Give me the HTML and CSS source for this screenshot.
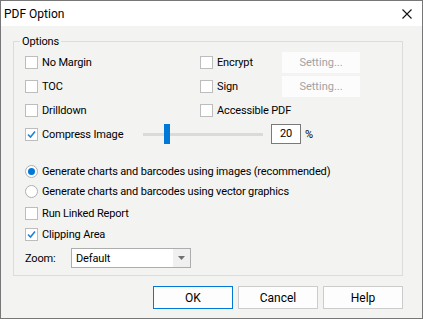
FILE: index.html
```html
<!DOCTYPE html>
<html lang="en">
<head>
    <meta charset="UTF-8">
    <meta name="viewport" content="width=device-width, initial-scale=1.0">
    <title>PDF Option</title>
    <link rel="stylesheet" href="styles.css">
</head>
<body>
    <div class="window">
        <div class="titlebar">
            <span class="title">PDF Option</span>
            <svg class="close" width="10" height="10" viewBox="0 0 10 10">
                <path d="M0.5 0.5 L9.5 9.5 M9.5 0.5 L0.5 9.5" stroke="#111" stroke-width="1.1" fill="none"/>
            </svg>
        </div>

        <fieldset class="group">
            <legend>Options</legend>
            <div class="options">
                <div class="grid">
                    <div class="row">
                        <span class="check"></span>
                        <span class="label">No Margin</span>
                    </div>
                    <div class="row">
                        <span class="check"></span>
                        <span class="label fixed">Encrypt</span>
                        <button class="setting" disabled>Setting...</button>
                    </div>
                    <div class="row">
                        <span class="check"></span>
                        <span class="label">TOC</span>
                    </div>
                    <div class="row">
                        <span class="check"></span>
                        <span class="label fixed">Sign</span>
                        <button class="setting" disabled>Setting...</button>
                    </div>
                    <div class="row">
                        <span class="check"></span>
                        <span class="label">Drilldown</span>
                    </div>
                    <div class="row">
                        <span class="check"></span>
                        <span class="label">Accessible PDF</span>
                    </div>
                </div>

                <div class="row">
                    <span class="check checked">
                        <svg width="11" height="11" viewBox="0 0 11 11"><polyline points="2,5.5 4.5,8 9,2.5" stroke="#1a84d8" stroke-width="1.6" fill="none"/></svg>
                    </span>
                    <span class="label compress">Compress Image</span>
                    <div class="slider">
                        <div class="track"></div>
                        <div class="thumb"></div>
                    </div>
                    <div class="number">20</div>
                    <span class="percent">%</span>
                </div>

                <div class="radios">
                    <div class="row short">
                        <span class="radio on"></span>
                        <span class="label">Generate charts and barcodes using images (recommended)</span>
                    </div>
                    <div class="row short">
                        <span class="radio"></span>
                        <span class="label">Generate charts and barcodes using vector graphics</span>
                    </div>
                </div>

                <div class="row short linked">
                    <span class="check"></span>
                    <span class="label">Run Linked Report</span>
                </div>
                <div class="row short clipping">
                    <span class="check checked">
                        <svg width="11" height="11" viewBox="0 0 11 11"><polyline points="2,5.5 4.5,8 9,2.5" stroke="#1a84d8" stroke-width="1.6" fill="none"/></svg>
                    </span>
                    <span class="label">Clipping Area</span>
                </div>
                <div class="row short zoom">
                    <span class="zoom-label">Zoom:</span>
                    <div class="select">
                        <span class="value">Default</span>
                        <span class="arrow">
                            <svg width="7" height="4" viewBox="0 0 7 4"><polygon points="0,0 7,0 3.5,4" fill="#707070"/></svg>
                        </span>
                    </div>
                </div>
            </div>
        </fieldset>

        <div class="actions">
            <button class="btn default">OK</button>
            <button class="btn">Cancel</button>
            <button class="btn">Help</button>
        </div>
    </div>
</body>
</html>
```
FILE: styles.css
```css
body {
    margin: 0;
    font-family: Roboto, "Liberation Sans", sans-serif;
    font-size: 11px;
    letter-spacing: -0.15px;
    color: #000;
}

.window {
    width: 423px;
    height: 319px;
    box-sizing: border-box;
    border: 1px solid #777;
    background: #f3f3f2;
}

.titlebar {
    height: 25px;
    background: #fff;
    display: flex;
    align-items: center;
    justify-content: space-between;
    padding: 0 10px 0 3px;
}

.title {
    font-size: 12px;
    letter-spacing: 0;
}

.close {
    margin-top: 1px;
}

.group {
    margin: 8px 19px 0 12px;
    padding: 0;
    border: 1px solid #dcdcdc;
    min-width: 0;
}

.group legend {
    margin-left: 6px;
    padding: 0 2px;
    line-height: 15px;
}

.options {
    padding: 1px 0 7px 11px;
}

.grid {
    display: grid;
    grid-template-columns: 175px 1fr;
}

.row {
    height: 24px;
    display: flex;
    align-items: center;
}

.row.short {
    height: 20px;
}

.check {
    width: 13px;
    height: 13px;
    box-sizing: border-box;
    border: 1px solid #bdbdbd;
    background: #fff;
    flex: none;
    display: flex;
    align-items: center;
    justify-content: center;
}

.label {
    margin-left: 4px;
    white-space: nowrap;
}

.label.fixed {
    width: 65px;
}

.setting {
    width: 78px;
    height: 21px;
    border: none;
    background: #fcfcfc;
    color: #a2a2a2;
    font: inherit;
    padding: 0;
}

.label.compress {
    width: 101px;
}

.slider {
    width: 120px;
    height: 20px;
    position: relative;
    display: flex;
    align-items: center;
}

.track {
    width: 100%;
    height: 3px;
    background: #dadada;
}

.thumb {
    position: absolute;
    left: 21px;
    top: 0;
    width: 6px;
    height: 20px;
    background: #0078d7;
}

.number {
    margin-left: 8px;
    width: 30px;
    height: 20px;
    box-sizing: border-box;
    border: 1px solid #7a7a7a;
    background: #fff;
    text-align: center;
    line-height: 18px;
}

.percent {
    margin-left: 4px;
}

.radios {
    margin-top: 15px;
}

.radio {
    width: 13px;
    height: 13px;
    box-sizing: border-box;
    border: 1px solid #b0b0b0;
    border-radius: 50%;
    background: #fff;
    flex: none;
    display: flex;
    align-items: center;
    justify-content: center;
}

.radio.on::after {
    content: "";
    width: 7px;
    height: 7px;
    border-radius: 50%;
    background: #0078d7;
}

.linked {
    margin-top: 2px;
}

.clipping {
    margin-top: 1px;
}

.zoom {
    margin-top: 4px;
}

.zoom-label {
    width: 46px;
}

.select {
    width: 120px;
    height: 20px;
    box-sizing: border-box;
    border: 1px solid #adadad;
    background: #fff;
    display: flex;
    align-items: center;
    justify-content: space-between;
}

.select .value {
    padding-left: 4px;
}

.select .arrow {
    width: 17px;
    height: 18px;
    background: #f0f0f0;
    display: flex;
    align-items: center;
    justify-content: center;
}

.actions {
    margin: 10px 19px 0 0;
    display: flex;
    justify-content: flex-end;
    gap: 5px;
}

.btn {
    width: 80px;
    height: 23px;
    padding: 0;
    border: 1px solid #cccccc;
    background: #fdfdfd;
    font: inherit;
    font-size: 12px;
    letter-spacing: 0;
    color: #000;
}

.btn.default {
    border-color: #0078d7;
}
```
